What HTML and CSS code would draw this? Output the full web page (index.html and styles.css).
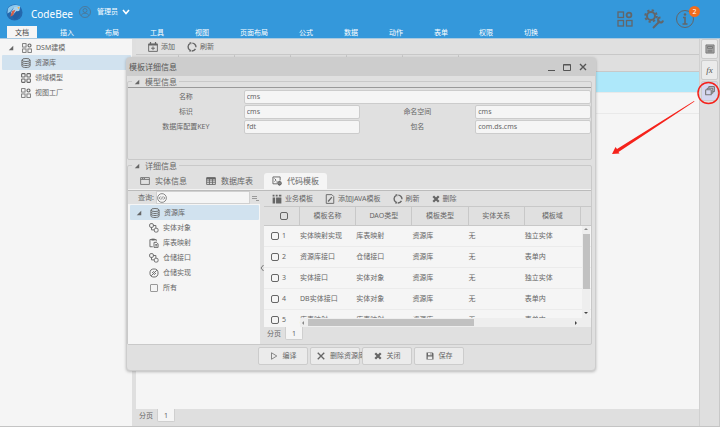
FILE: index.html
```
<!DOCTYPE html>
<html lang="zh-CN">

<head>
    <meta charset="UTF-8">
    <meta name="viewport" content="width=device-width, initial-scale=1.0">
    <title>CodeBee</title>
    <link rel="stylesheet" href="styles.css">
</head>

<body>
    <!-- 图标 -->
    <svg class="sprite" aria-hidden="true">
        <symbol id="i-blocks" viewBox="0 0 16 16"><g fill="none" stroke="currentColor" stroke-width="1.3"><rect x="1" y="1" width="5.5" height="5.5"/><rect x="1" y="9.5" width="5.5" height="5.5"/><rect x="9.5" y="9.5" width="5.5" height="5.5"/><circle cx="12" cy="4" r="2.4" stroke-width="1.8"/></g></symbol>
        <symbol id="i-db" viewBox="0 0 16 16"><g fill="none" stroke="currentColor" stroke-width="1.5"><ellipse cx="8" cy="3.2" rx="6.5" ry="2.4"/><path d="M1.500 3.200V12.800C1.500 16 14.500 16 14.500 12.800V3.200M1.500 6.400C1.500 9.600 14.500 9.600 14.500 6.400M1.500 9.600C1.500 12.800 14.500 12.800 14.500 9.600"/></g></symbol>
        <symbol id="i-four" viewBox="0 0 16 16"><g fill="none" stroke="currentColor" stroke-width="1.7"><rect x="1" y="1" width="5.500" height="5.500" rx="1"/><rect x="9.500" y="1" width="5.500" height="5.500" rx="1"/><rect x="1" y="9.500" width="5.500" height="5.500" rx="1"/><rect x="9.500" y="9.500" width="5.500" height="5.500" rx="1"/></g></symbol>
        <symbol id="i-add" viewBox="0 0 16 16"><path fill="none" stroke="currentColor" stroke-width="1.500" d="M1 3H15V15H1ZM8 7V13M5 10H11"/><path fill="currentColor" d="M1 3H15V5.500H1ZM3 0H5V4H3ZM11 0H13V4H11Z"/></symbol>
        <symbol id="i-refresh" viewBox="0 0 16 16"><path fill="none" stroke="currentColor" stroke-width="2.200" d="M5.500 2.200A6.300 6.300 0 0 0 5 13.500M7.500 14.300A6.300 6.300 0 0 0 13.500 11M14.300 8.500A6.300 6.300 0 0 0 8.500 1.700"/><path fill="currentColor" d="M3.500 .5H7V4ZM3 15H6.500V11.500Z"/></symbol>
        <symbol id="i-link" viewBox="0 0 16 16"><g fill="none" stroke="currentColor" stroke-width="1.500"><rect x="1" y="1" width="6" height="6" rx="2"/><rect x="8.500" y="8.500" width="6" height="6" rx="2"/><path d="M7 4H11V8.500M4 7V11H8.500"/></g></symbol>
        <symbol id="i-paste" viewBox="0 0 16 16"><path fill="none" stroke="currentColor" stroke-width="1.500" d="M6 14H1.500V2.500H11.500V5.500M8 7H12L14.500 9.500V15H8ZM10 10.500H13M10 12.500H13"/><path fill="currentColor" d="M4 1H9V4H4Z"/></symbol>
        <symbol id="i-slash" viewBox="0 0 16 16"><g fill="none" stroke="currentColor" stroke-width="1.500"><circle cx="8" cy="8" r="6.500"/><path d="M3.500 12.500L12.500 3.500M5 8L8 5M8 11L11 8"/></g></symbol>
        <symbol id="i-window" viewBox="0 0 16 16"><path fill="none" stroke="currentColor" stroke-width="1.300" d="M1 2.500H15V13.500H1ZM1 5.500H15M3 4H5M6 4H8"/></symbol>
        <symbol id="i-table" viewBox="0 0 16 16"><path fill="none" stroke="currentColor" stroke-width="1.400" d="M1 3H15V13.500H1ZM1 6.500H15M1 10H15M5.500 3V13.500M10.500 3V13.500"/><path fill="currentColor" d="M1 2H15V5H1Z"/></symbol>
        <symbol id="i-code" viewBox="0 0 16 16"><path fill="none" stroke="currentColor" stroke-width="1.500" d="M8 12.500H1.500V1.500H13V7M4 4L6.500 6.500L4 9M7 9.500H9"/><circle cx="12" cy="11.500" r="2.500" fill="none" stroke="currentColor" stroke-width="2"/><path stroke="currentColor" d="M12 7.500V15.500M8 11.500H16"/></symbol>
        <symbol id="i-biz" viewBox="0 0 16 16"><path fill="currentColor" d="M1 1H4V4H1ZM6 1H9V4H6ZM11 1H15V4H11ZM1 5.500H5V15H1ZM6.500 5.500H15V15H6.500Z"/></symbol>
        <symbol id="i-java" viewBox="0 0 16 16"><path fill="none" stroke="currentColor" stroke-width="1.500" d="M2 1H11L14 4V15H2Z"/><path stroke="currentColor" stroke-width="2" d="M5 12L11 5"/></symbol>
        <symbol id="i-del" viewBox="0 0 16 16"><path stroke="currentColor" stroke-width="4.500" d="M2.500 2.500L13.500 13.500M13.500 2.500L2.500 13.500"/></symbol>
        <symbol id="i-x" viewBox="0 0 16 16"><path stroke="currentColor" stroke-width="2.800" d="M1.500 1.500L14.500 14.500M14.500 1.500L1.500 14.500"/></symbol>
        <symbol id="i-play" viewBox="0 0 16 16"><path fill="none" stroke="currentColor" stroke-width="1.500" d="M3 1.500L13.500 8L3 14.500Z"/></symbol>
        <symbol id="i-save" viewBox="0 0 16 16"><path fill="currentColor" fill-rule="evenodd" d="M1 1H13L15 3V15H1ZM4 2V6.500H12V2ZM3.500 9V14H12.500V9Z"/><path fill="currentColor" d="M9 2.500H11V5.500H9Z"/></symbol>
        <symbol id="i-tri" viewBox="0 0 16 16"><path fill="currentColor" d="M14 2V14H2Z"/></symbol>
    </svg>

    <header class="header">
        <div class="brand">
            <svg class="logo" viewBox="0 0 36 36" aria-hidden="true">
                <circle cx="18" cy="18" r="17" fill="#2468ad"/>
                <path fill="#8cc8ed" d="M4 10C9 1 22 0 30 5L23 10L16 8L10 16L3 20Z"/>
                <path fill="#a9d3ee" d="M17 7L30 4L28 17L22 15L15 23L10 19Z"/>
                <path fill="#d6604a" d="M13 15L20 12L15 24L9 27Z"/>
                <path fill="#2360a5" d="M22 17L29 14C33 24 25 32 18 33L14 27Z"/>
                <path fill="#f0b34c" d="M24 7L29 6L27 11Z"/>
            </svg>
            <h1>CodeBee</h1>
            <svg class="avatar" viewBox="0 0 24 24" aria-hidden="true"><g fill="none" stroke="#536f87" stroke-width="1.500"><circle cx="12" cy="12" r="11"/><circle cx="12" cy="9" r="4"/><path d="M4.500 19C6 13 18 13 19.500 19"/></g></svg>
            <button class="user" type="button">管理员
                <svg class="chevron" viewBox="0 0 8 6"><path fill="none" stroke="#fff" stroke-width="1.600" d="M1 1L4 4.500L7 1"/></svg>
            </button>
        </div>
        <div class="shortcuts">
            <button type="button" aria-label="应用"><svg class="icon-lg" viewBox="0 0 16 16"><use href="#i-blocks"/></svg></button>
            <button type="button" aria-label="设置">
                <svg class="icon-xl" viewBox="0 0 40 40"><circle cx="14" cy="14" r="8" fill="none" stroke="currentColor" stroke-width="4"/><circle cx="14" cy="14" r="11.500" fill="none" stroke="currentColor" stroke-width="4" stroke-dasharray="4.500 4.530"/><path stroke="currentColor" stroke-width="4" d="M18 38L32 24"/><path fill="none" stroke="currentColor" stroke-width="4" d="M33 17A5 5 0 1 0 38 23"/></svg>
            </button>
            <button type="button" aria-label="消息" class="notice">
                <svg class="icon-xl" viewBox="0 0 20 20"><circle cx="10" cy="10" r="8.500" fill="none" stroke="currentColor"/><circle cx="10" cy="5.500" r="1.300" fill="currentColor"/><path fill="none" stroke="currentColor" stroke-width="1.600" d="M8 8.500H10V15M7.500 15H12.500"/></svg>
                <span class="badge">2</span>
            </button>
        </div>
        <nav class="menu">
            <a class="active" href="#">文档</a>
            <a href="#">插入</a>
            <a href="#">布局</a>
            <a href="#">工具</a>
            <a href="#">视图</a>
            <a href="#">页面布局</a>
            <a href="#">公式</a>
            <a href="#">数据</a>
            <a href="#">动作</a>
            <a href="#">表单</a>
            <a href="#">权限</a>
            <a href="#">切换</a>
        </nav>
    </header>

    <div class="workspace">
        <!-- 左侧树 -->
        <aside class="sidebar">
            <ul class="tree">
                <li class="root"><svg class="tri"><use href="#i-tri"/></svg><svg class="icon"><use href="#i-blocks"/></svg>DSM建模</li>
                <li class="selected"><svg class="icon"><use href="#i-db"/></svg>资源库</li>
                <li><svg class="icon"><use href="#i-four"/></svg>领域模型</li>
                <li><svg class="icon"><use href="#i-blocks"/></svg>视图工厂</li>
            </ul>
        </aside>

        <main class="content">
            <div class="toolbar main-toolbar">
                <button type="button"><svg class="icon"><use href="#i-add"/></svg>添加</button>
                <button type="button"><svg class="icon"><use href="#i-refresh"/></svg>刷新</button>
            </div>
            <div class="list-head"><i></i><i></i><i></i><i></i><i></i><i></i></div>
            <div class="list-body">
                <div class="list-row current"></div>
                <div class="list-row"></div>
            </div>
            <div class="pager"><span>分页</span><a href="#">1</a></div>
        </main>

        <div class="rail">
            <button type="button" aria-label="属性"><svg class="rail-icon" viewBox="0 0 16 16"><path fill="#aaa" stroke="#777" stroke-width="1.500" d="M1.500 1.500H14.500V14.500H1.500ZM4 4H12V7H4ZM4 10H12M4 12.500H12"/></svg></button>
            <button type="button" class="fx">fx</button>
            <button type="button" class="on" aria-label="窗口"><svg class="rail-icon" viewBox="0 0 16 16"><g fill="#d5d7f0" stroke="#777" stroke-width="1.800"><rect x="6" y="1" width="9" height="8" rx="1"/><rect x="3.500" y="3.500" width="9" height="8" rx="1"/><rect x="1" y="6" width="9" height="8" rx="1"/></g></svg></button>
        </div>
    </div>

    <!-- 弹窗 -->
    <section class="dialog" role="dialog" aria-labelledby="dialogTitle">
        <div class="titlebar">
            <h2 id="dialogTitle">模板详细信息</h2>
            <button type="button" aria-label="最小化"><svg class="icon-sm" viewBox="0 0 8 8"><path stroke="currentColor" d="M1 7.500H8"/></svg></button>
            <button type="button" aria-label="最大化"><svg class="icon-sm" viewBox="0 0 8 8"><path fill="none" stroke="currentColor" d="M.500 1.500H7.500V7.500H.500ZM.500 2H7.500"/></svg></button>
            <button type="button" aria-label="关闭"><svg class="icon-sm" viewBox="0 0 8 8"><path stroke="currentColor" stroke-width="1.400" d="M1 1L7 7M7 1L1 7"/></svg></button>
        </div>

        <fieldset class="group">
            <legend><svg class="tri"><use href="#i-tri"/></svg>模型信息</legend>
            <div class="form">
                <label for="fName">名称</label>
                <input class="wide" id="fName" type="text" value="cms">
                <label for="fId">标识</label>
                <input id="fId" type="text" value="cms">
                <label for="fSpace">命名空间</label>
                <input id="fSpace" type="text" value="cms">
                <label for="fKey">数据库配置KEY</label>
                <input id="fKey" type="text" value="fdt">
                <label for="fPackage">包名</label>
                <input id="fPackage" type="text" value="com.ds.cms">
            </div>
        </fieldset>

        <fieldset class="group">
            <legend><svg class="tri"><use href="#i-tri"/></svg>详细信息</legend>
            <div class="tabs">
                <button type="button"><svg class="icon"><use href="#i-window"/></svg>实体信息</button>
                <button type="button"><svg class="icon"><use href="#i-table"/></svg>数据库表</button>
                <button type="button" class="active"><svg class="icon"><use href="#i-code"/></svg>代码模板</button>
            </div>
            <div class="panes">
                <div class="pane-left">
                    <div class="search">
                        <label for="query">查询:</label>
                        <div class="search-box">
                            <svg class="icon" viewBox="0 0 16 16"><g fill="none" stroke="currentColor" stroke-width="1.200"><circle cx="8" cy="8" r="7"/><path d="M6 5.500L3.500 8L6 10.500M10 5.500L12.500 8L10 10.500M8.500 6L7.500 10"/></g></svg>
                            <input id="query" type="text">
                        </div>
                        <button type="button" aria-label="展开"><svg class="icon-sm" viewBox="0 0 8 8"><path fill="none" stroke="#999" d="M1 2.500H6M1 4.500H6M5 6.500H8"/></svg></button>
                    </div>
                    <ul class="tree">
                        <li class="root selected"><svg class="tri"><use href="#i-tri"/></svg><svg class="icon"><use href="#i-db"/></svg>资源库</li>
                        <li><svg class="icon"><use href="#i-link"/></svg>实体对象</li>
                        <li><svg class="icon"><use href="#i-paste"/></svg>库表映射</li>
                        <li><svg class="icon"><use href="#i-link"/></svg>仓储接口</li>
                        <li><svg class="icon"><use href="#i-slash"/></svg>仓储实现</li>
                        <li><input id="all" type="checkbox"><label for="all">所有</label></li>
                    </ul>
                </div>
                <div class="splitter"><svg viewBox="0 0 4 8"><path fill="none" stroke="#777" d="M3.500 1L1 4L3.500 7"/></svg></div>
                <div class="pane-right">
                    <div class="toolbar">
                        <button type="button"><svg class="icon"><use href="#i-biz"/></svg>业务模板</button>
                        <button type="button"><svg class="icon"><use href="#i-java"/></svg>添加JAVA模板</button>
                        <button type="button"><svg class="icon"><use href="#i-refresh"/></svg>刷新</button>
                        <button type="button"><svg class="icon-sm"><use href="#i-del"/></svg>删除</button>
                    </div>
                    <div class="grid">
                        <table>
                            <thead>
                                <tr>
                                    <th class="check"><input type="checkbox" aria-label="全选"></th>
                                    <th>模板名称</th>
                                    <th>DAO类型</th>
                                    <th>模板类型</th>
                                    <th>实体关系</th>
                                    <th>模板域</th>
                                    <th class="gutter"></th>
                                </tr>
                            </thead>
                            <tbody>
                                <tr><td class="check"><label><input type="checkbox">1</label></td><td>实体映射实现</td><td>库表映射</td><td>资源库</td><td>无</td><td>独立实体</td><td></td></tr>
                                <tr><td class="check"><label><input type="checkbox">2</label></td><td>资源库接口</td><td>仓储接口</td><td>资源库</td><td>无</td><td>表单内</td><td></td></tr>
                                <tr><td class="check"><label><input type="checkbox">3</label></td><td>实体接口</td><td>实体对象</td><td>资源库</td><td>无</td><td>独立实体</td><td></td></tr>
                                <tr><td class="check"><label><input type="checkbox">4</label></td><td>DB实体接口</td><td>实体对象</td><td>资源库</td><td>无</td><td>表单内</td><td></td></tr>
                                <tr><td class="check"><label><input type="checkbox">5</label></td><td>库表映射</td><td>库表映射</td><td>资源库</td><td>无</td><td>表单内</td><td></td></tr>
                            </tbody>
                        </table>
                        <div class="vscroll"><span class="up"></span><div class="thumb"></div><span class="down"></span></div>
                        <div class="hscroll"><span class="left"></span><div class="thumb"></div><span class="right"></span></div>
                    </div>
                    <div class="pager"><span>分页</span><a href="#">1</a></div>
                </div>
            </div>
        </fieldset>

        <div class="actions">
            <button type="button"><svg class="icon-sm"><use href="#i-play"/></svg>编译</button>
            <button type="button"><svg class="icon-sm"><use href="#i-x"/></svg>删除资源库</button>
            <button type="button"><svg class="icon-sm"><use href="#i-del"/></svg>关闭</button>
            <button type="button"><svg class="icon-sm"><use href="#i-save"/></svg>保存</button>
        </div>
    </section>

    <!-- 红色标注 -->
    <svg class="mark" viewBox="0 0 110 78" aria-hidden="true">
        <circle cx="98.500" cy="13" r="10.500" fill="none" stroke="#f5221b" stroke-width="1.500"/>
        <path fill="#f5221b" d="M84 21L7 69L5.500 67L2 74L9.500 73.500L8.500 72L84.500 21.500Z"/>
    </svg>
</body>

</html>
```

FILE: styles.css
```
* {
    box-sizing: border-box;
    margin: 0;
    padding: 0;
}

body {
    position: relative;
    display: flex;
    flex-direction: column;
    min-height: 100vh;
    background: #f5f5f5;
    color: #666;
    font: 7px/10px "Noto Sans", "Noto Sans CJK SC", sans-serif;
}

button,
input {
    border: 0;
    background: none;
    color: inherit;
    font: inherit;
}

button {
    display: flex;
    align-items: center;
    white-space: nowrap;
}

a {
    color: inherit;
    text-decoration: none;
}

ul {
    list-style: none;
}

svg {
    flex: none;
    display: block;
}

.sprite {
    position: absolute;
    width: 0;
    height: 0;
}

.icon {
    width: 10px;
    height: 10px;
}

.icon-sm {
    width: 8px;
    height: 8px;
}

.icon-lg {
    width: 16px;
    height: 16px;
}

.icon-xl {
    width: 20px;
    height: 20px;
}

.tri {
    width: 6px;
    height: 6px;
}

input[type="checkbox"] {
    appearance: none;
    flex: none;
    display: block;
    width: 8px;
    height: 8px;
    border: 1px solid #666;
    border-radius: 2px;
}

/* 顶部 */
.header {
    display: grid;
    grid-template-columns: 1fr auto;
    grid-template-rows: 26px 12px;
    background: #3498db;
    border-bottom: 1px solid #a9c9e0;
}

.brand {
    display: flex;
    align-items: center;
    padding: 0 0 2px 6px;
    color: #fff;
}

.logo {
    width: 17px;
    height: 17px;
}

.brand h1 {
    margin: 4px 6px 0 8px;
    font-size: 10px;
    font-weight: 400;
    line-height: 14px;
}

.avatar {
    width: 12px;
    height: 12px;
}

.user {
    gap: 4px;
    padding-left: 6px;
}

.chevron {
    width: 8px;
    height: 6px;
}

.shortcuts {
    display: flex;
    align-items: flex-end;
    gap: 11px;
    height: 29px;
    padding-right: 25px;
    color: #62666a;
}

.shortcuts button:first-child {
    height: 20px;
}

.notice {
    position: relative;
}

.badge {
    position: absolute;
    top: -3px;
    right: -5px;
    width: 11px;
    height: 11px;
    border-radius: 50%;
    background: #f26c1c;
    color: #fff;
    line-height: 11px;
    text-align: center;
}

.menu {
    grid-column: 1 / -1;
    display: flex;
    gap: 15px;
    padding-left: 7px;
    color: #fff;
}

.menu a {
    padding: 2px 8px 0;
    white-space: nowrap;
}

.menu .active {
    background: #f5f5f5;
    color: #444;
}

/* 主体 */
.workspace {
    flex: 1;
    display: flex;
    background: #dfdfdf;
    border-bottom: 1px solid #c4c4c4;
}

.sidebar {
    width: 132px;
    padding: 1px 1px 0 2px;
    background: #f5f5f5;
}

.tree li {
    display: flex;
    align-items: center;
    gap: 4px;
    height: 15px;
    padding-left: 19px;
}

.tree .root {
    padding-left: 6px;
}

.tree .root .tri {
    margin-right: 4px;
}

.tree .selected {
    background: #d1e2ef;
    border-radius: 1px;
}

.tree input[type="checkbox"] {
    margin: 0 1px;
    border-color: #999;
    border-radius: 1px;
}

.content {
    flex: 1;
    display: flex;
    flex-direction: column;
    margin-left: 4px;
}

.toolbar {
    display: flex;
    align-items: center;
    gap: 12px;
    height: 16px;
    padding-left: 8px;
    background: #e0e0e0;
    border-bottom: 1px solid #c8c8c8;
}

.toolbar button {
    gap: 3px;
}

.main-toolbar {
    padding-left: 12px;
}

.list-head {
    display: flex;
    height: 17px;
    border-bottom: 1px solid #c8c8c8;
}

.list-head i {
    width: 56px;
    border-right: 1px solid #c8c8c8;
}

.list-head i:first-child {
    width: 43px;
}

.list-body {
    flex: 1;
    background: #f5f5f5;
}

.list-row {
    height: 21px;
    border-bottom: 1px solid #e9e9e9;
}

.list-row.current {
    background: #aee8fa;
}

.pager {
    display: flex;
    gap: 4px;
    height: 17px;
    padding-left: 3px;
    line-height: 13px;
}

.pager a {
    width: 18px;
    height: 13px;
    background: #f5f5f5;
    border: 1px solid #cfcfcf;
    border-top: 0;
    border-radius: 0 0 2px 2px;
    text-align: center;
}

.rail {
    width: 21px;
    padding: 0 1px 0 1px;
    border-left: 1px solid #d0d0d0;
    border-right: 1px solid #c8c8c8;
}

.rail button {
    justify-content: center;
    width: 100%;
    height: 20px;
    margin-bottom: 1px;
    background: #ebebeb;
    border: 1px solid #ccc;
    border-radius: 2px;
}

.rail .fx {
    color: #555;
    font: italic 9px/10px "Liberation Serif", serif;
}

.rail .on {
    background: #d5d7f0;
}

.rail-icon {
    width: 10px;
    height: 10px;
}

/* 弹窗 */
.dialog {
    position: absolute;
    top: 57px;
    left: 126px;
    right: 124px;
    padding-bottom: 5px;
    background: #e0e0e0;
    border: 1px solid #cdcdcd;
    border-radius: 4px;
    box-shadow: 0 1px 3px rgba(0, 0, 0, .25);
}

.titlebar {
    display: flex;
    align-items: center;
    gap: 8px;
    height: 18px;
    padding: 0 8px 0 2px;
    background: #cdcdcd;
    color: #555;
}

.titlebar h2 {
    flex: 1;
    font-size: 8px;
    font-weight: 400;
}

.group {
    min-width: 0;
    margin: 0 3px 0 0;
    border: 1px solid #c9c9c9;
    border-radius: 2px;
}

.group legend {
    display: flex;
    align-items: center;
    gap: 5px;
    margin-left: 4px;
    padding: 0 2px;
    font-size: 8px;
    line-height: 11px;
}

.form {
    display: grid;
    grid-template-columns: repeat(4, 1fr);
    grid-auto-rows: 14px;
    gap: 1px 0;
    height: 72px;
    padding-top: 2px;
    border-top: 1px solid #999;
}

.form label {
    line-height: 14px;
    text-align: center;
}

.form input {
    width: 100%;
    padding: 0 2px;
    background: #f5f5f5;
    border: 1px solid #ccc;
    border-radius: 2px;
}

.form .wide {
    grid-column: 2 / -1;
}

.tabs {
    display: flex;
    height: 19px;
    padding: 2px 0 0 4px;
    border-bottom: 1px solid #f2f2f2;
}

.tabs button {
    gap: 5px;
    padding: 0 8px;
    margin-right: 3px;
    border-radius: 3px 3px 0 0;
    font-size: 8px;
}

.tabs .active {
    background: #f5f5f5;
}

.panes {
    display: flex;
    border-top: 1px solid #bbb;
}

.pane-left {
    flex: none;
    width: 132px;
    background: #f5f5f5;
}

.search {
    display: flex;
    height: 13px;
    background: #e0e0e0;
}

.search label {
    flex: none;
    width: 28px;
    padding-right: 2px;
    line-height: 13px;
    text-align: right;
    white-space: nowrap;
}

.search-box {
    flex: 1;
    display: flex;
    align-items: center;
    min-width: 0;
    background: #f5f5f5;
    border: 1px solid #d0d0d0;
}

.search-box input {
    flex: 1;
    min-width: 0;
}

.search button {
    flex: none;
    width: 10px;
    justify-content: center;
}

.pane-left .tree {
    padding: 1px 1px 0 2px;
}

.splitter {
    display: flex;
    align-items: center;
    width: 4px;
}

.splitter svg {
    width: 4px;
    height: 8px;
}

.pane-right {
    flex: 1;
    min-width: 0;
}

.grid {
    position: relative;
    height: 120px;
    overflow: hidden;
    background: #f5f5f5;
}

.grid table {
    width: 100%;
    border-collapse: separate;
    border-spacing: 0;
    table-layout: fixed;
}

.grid th {
    height: 19px;
    background: #e0e0e0;
    border-right: 1px solid #c8c8c8;
    border-bottom: 1px solid #c8c8c8;
    font-weight: 400;
}

.grid td {
    height: 21px;
    border-bottom: 1px solid #ebebeb;
    white-space: nowrap;
}

.grid .check {
    width: 36px;
}

.grid th.check {
    padding-left: 4px;
}

.grid th.check input {
    margin: 0 auto;
}

.grid td label {
    display: flex;
    align-items: center;
    gap: 3px;
    padding-left: 7px;
}

.grid .gutter {
    width: 10px;
    border-right: 0;
}

.vscroll,
.hscroll {
    position: absolute;
    display: flex;
    align-items: center;
    background: #eee;
}

.vscroll {
    top: 19px;
    right: 1px;
    bottom: 9px;
    flex-direction: column;
    width: 8px;
}

.hscroll {
    left: 36px;
    right: 0;
    bottom: 0;
    height: 9px;
    padding-right: 10px;
}

.thumb {
    background: #c1c1c1;
}

.vscroll .thumb {
    width: 7px;
    height: 60%;
    margin: 4px 0 auto;
}

.hscroll .thumb {
    width: 59%;
    height: 7px;
    margin: 0 auto 0 4px;
}

.up,
.down,
.left,
.right {
    border: 2px solid transparent;
}

.up {
    margin-top: 2px;
    border-top: 0;
    border-bottom-color: #888;
}

.down {
    margin-bottom: 4px;
    border-bottom: 0;
    border-top-color: #444;
}

.left {
    margin-left: 2px;
    border-left: 0;
    border-right-color: #888;
}

.right {
    margin-right: 4px;
    border-right: 0;
    border-left-color: #444;
}

.actions {
    display: flex;
    justify-content: center;
    gap: 2px;
    padding-top: 2px;
}

.actions button {
    justify-content: safe center;
    gap: 5px;
    width: 50px;
    height: 18px;
    padding: 0 6px;
    background: #ebebeb;
    border: 1px solid #ccc;
    border-radius: 2px;
}

.mark {
    position: absolute;
    top: 80px;
    right: 0;
    width: 110px;
    height: 78px;
    pointer-events: none;
}
```
